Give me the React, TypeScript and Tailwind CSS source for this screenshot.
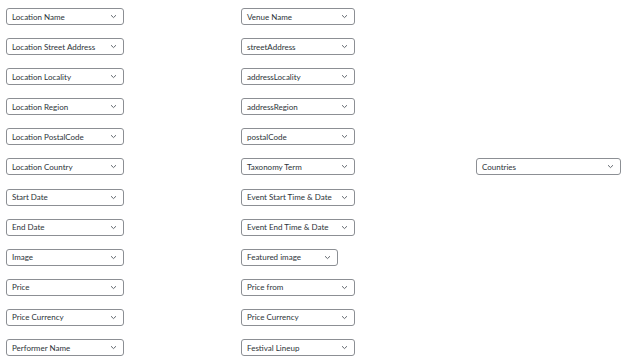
import React from 'react'

type Cell = { label: string; w: string } | null

const rows: Cell[][] = [
  [{ label: 'Location Name', w: 'w-[118px]' }, { label: 'Venue Name', w: 'w-[114px]' }, null],
  [{ label: 'Location Street Address', w: 'w-[118px]' }, { label: 'streetAddress', w: 'w-[114px]' }, null],
  [{ label: 'Location Locality', w: 'w-[118px]' }, { label: 'addressLocality', w: 'w-[114px]' }, null],
  [{ label: 'Location Region', w: 'w-[118px]' }, { label: 'addressRegion', w: 'w-[114px]' }, null],
  [{ label: 'Location PostalCode', w: 'w-[118px]' }, { label: 'postalCode', w: 'w-[114px]' }, null],
  [
    { label: 'Location Country', w: 'w-[118px]' },
    { label: 'Taxonomy Term', w: 'w-[114px]' },
    { label: 'Countries', w: 'w-[145px]' },
  ],
  [{ label: 'Start Date', w: 'w-[118px]' }, { label: 'Event Start Time & Date', w: 'w-[114px]' }, null],
  [{ label: 'End Date', w: 'w-[118px]' }, { label: 'Event End Time & Date', w: 'w-[114px]' }, null],
  [{ label: 'Image', w: 'w-[118px]' }, { label: 'Featured image', w: 'w-[97px]' }, null],
  [{ label: 'Price', w: 'w-[118px]' }, { label: 'Price from', w: 'w-[114px]' }, null],
  [{ label: 'Price Currency', w: 'w-[118px]' }, { label: 'Price Currency', w: 'w-[114px]' }, null],
  [{ label: 'Performer Name', w: 'w-[118px]' }, { label: 'Festival Lineup', w: 'w-[114px]' }, null],
]

function Select({ label, w }: { label: string; w: string }) {
  return (
    <div
      className={`${w} h-[17px] flex items-center justify-between pl-[5px] pr-[6px] border border-[#8c8f94] rounded-[3px] bg-white text-[8px] text-[#2c3338] leading-none`}
    >
      <span className="whitespace-nowrap">{label}</span>
      <svg width="7" height="5" viewBox="0 0 7 5" className="shrink-0">
        <path d="M1 1.2 L3.5 3.6 L6 1.2" fill="none" stroke="#646970" strokeWidth="1" />
      </svg>
    </div>
  )
}

export default function App() {
  return (
    <div className="w-[640px] h-[363px] bg-white pt-2 pl-[6px] font-['Lato',sans-serif] overflow-hidden">
      {rows.map((row, i) => (
        <div key={i} className="grid grid-cols-[235px_235px_auto] h-[30.1px]">
          {row.map((cell, j) => (
            <div key={j}>{cell && <Select label={cell.label} w={cell.w} />}</div>
          ))}
        </div>
      ))}
    </div>
  )
}
